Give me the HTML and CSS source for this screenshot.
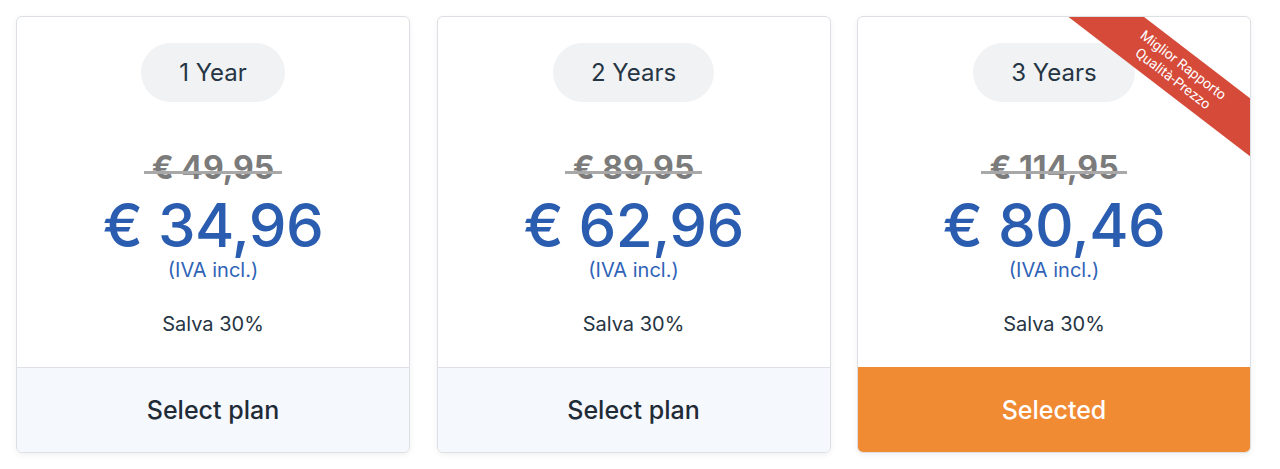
FILE: index.html
```html
<!DOCTYPE html>
<html>
<head>
<meta charset="utf-8">
<link rel="stylesheet" href="styles.css">
</head>
<body>
<div class="plans">
  <div class="card">
    <div class="body">
      <div class="pill">1 Year</div>
      <div class="old"><span>€ 49,95</span></div>
      <div class="price">€ 34,96</div>
      <div class="vat">(IVA incl.)</div>
      <div class="save">Salva 30%</div>
    </div>
    <div class="btn">Select plan</div>
  </div>
  <div class="card">
    <div class="body">
      <div class="pill">2 Years</div>
      <div class="old"><span>€ 89,95</span></div>
      <div class="price">€ 62,96</div>
      <div class="vat">(IVA incl.)</div>
      <div class="save">Salva 30%</div>
    </div>
    <div class="btn">Select plan</div>
  </div>
  <div class="card">
    <div class="ribbon">Miglior Rapporto<br>Qualità-Prezzo</div>
    <div class="body">
      <div class="pill">3 Years</div>
      <div class="old"><span>€ 114,95</span></div>
      <div class="price">€ 80,46</div>
      <div class="vat">(IVA incl.)</div>
      <div class="save">Salva 30%</div>
    </div>
    <div class="btn selected">Selected</div>
  </div>
</div>
</body>
</html>
```
FILE: styles.css
```css
* { box-sizing: border-box; }
body {
  margin: 0;
  padding: 16px 16px;
  background: #fff;
  font-family: Inter, "Noto Sans", sans-serif;
  color: #263544;
}
.plans {
  display: grid;
  grid-template-columns: 394px 394px 394px;
  column-gap: 26.5px;
}
.card {
  position: relative;
  overflow: hidden;
  height: 437px;
  border: 1px solid #dcdfe3;
  border-radius: 6px;
  box-shadow: 0 2px 6px rgba(0,0,0,0.06);
  display: flex;
  flex-direction: column;
  background: #fff;
}
.body {
  flex: 1;
  display: flex;
  flex-direction: column;
  align-items: center;
  padding-top: 26px;
}
.pill {
  height: 59px;
  padding: 0 38px;
  border-radius: 30px;
  background: #f0f2f4;
  font-size: 24px;
  line-height: 59px;
  color: #263544;
}
.old {
  margin-top: 48px;
  font-size: 32px;
  font-weight: 700;
  color: #7b7b7b;
  line-height: 36px;
}
.old span {
  position: relative;
  display: inline-block;
  padding: 0 8px;
}
.old span::after {
  content: "";
  position: absolute;
  left: 0;
  right: 0;
  top: 21px;
  height: 3px;
  background: #a8a8a8;
}
.price {
  margin-top: 9px;
  font-size: 60px;
  font-weight: 500;
  color: #2a5caf;
  line-height: 60px;
  letter-spacing: -0.6px;
}
.vat {
  margin-top: 3px;
  font-size: 20px;
  color: #2f63b8;
  line-height: 24px;
}
.save {
  margin-top: 29px;
  font-size: 20px;
  line-height: 26px;
  color: #263544;
}
.btn {
  height: 85px;
  border-top: 1px solid #dde1e6;
  background: #f5f8fd;
  display: flex;
  align-items: center;
  justify-content: center;
  font-size: 25px;
  font-weight: 500;
  color: #1f2b37;
}
.btn.selected {
  background: #f08a33;
  border-top-color: #f08a33;
  color: #fff;
}
.ribbon {
  position: absolute;
  left: 188px;
  top: 32px;
  width: 264px;
  height: 46px;
  transform: rotate(37.5deg);
  background: #d54a39;
  color: #fff;
  font-family: Roboto, "Noto Sans", sans-serif;
  font-size: 14px;
  line-height: 17px;
  text-align: center;
  display: flex;
  align-items: center;
  justify-content: center;
  z-index: 2;
}
```
